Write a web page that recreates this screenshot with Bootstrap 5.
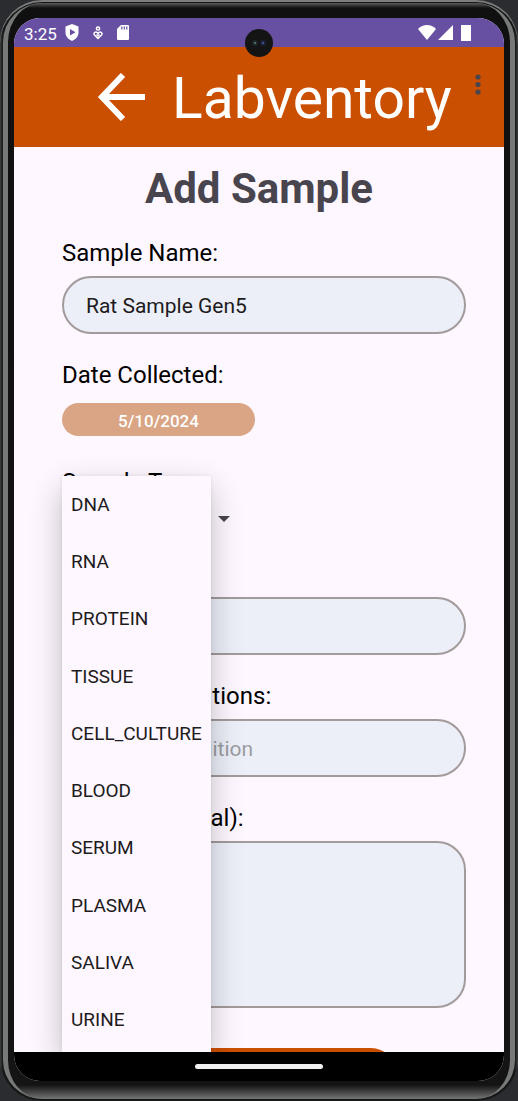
<!DOCTYPE html>
<html lang="en">
<head>
<meta charset="utf-8">
<meta name="viewport" content="width=device-width, initial-scale=1">
<title>Labventory – Add Sample</title>
<link href="https://cdn.jsdelivr.net/npm/bootstrap@5.3.0/dist/css/bootstrap.min.css" rel="stylesheet">
<style>
  :root { --brand: #cb4f00; --status: #6750a2; --surface: #fef7ff; --ink: #1d1b20; --muted: #49454f; }
  body { font-family: Roboto, sans-serif; background: #2b2c30; color: var(--ink); }
  /* device body: metal rim, then black bezel */
  .phone-rim {
    border-radius: 42px; padding: 3px 3px 2px 3px;
    background: linear-gradient(90deg, #3c3e3e 0, #161818 3px, #161818 calc(100% - 3px), #3c3e3e 100%);
    box-shadow: inset 0 2px 0 #7c7c7c;
  }
  .phone-bezel {
    border-radius: 39px; padding: 15px 6px 18px 6px;
    background: linear-gradient(180deg, #5a5a5a 0, #101010 5px, #141414 calc(100% - 14px), #757575 100%);
    border: solid #777979; border-width: 0 5px 0 5px;
  }
  .phone-screen { border-radius: 26px; background: var(--surface); }
  .camera { top: 11px; width: 28px; height: 28px; background: #141414; z-index: 3; }
  .status-bar { height: 29px; background: var(--status); font-size: 17px; line-height: 29px; padding-left: 10px; }
  .status-bar svg, .app-bar svg { display: block; }
  .status-icons { gap: 14px; }
  .app-bar { height: 100px; background: var(--brand); padding: 0 16px 0 80px; }
  .brand-name { font-size: 57px; line-height: 104px; margin-left: 22px; }
  .bare-btn { border: 0; background: none; padding: 0; color: inherit; }
  .more-btn { margin: 27px 5px 0 0; color: var(--muted); }
  .page-title { font-size: 42px; line-height: 50px; font-weight: 700; color: var(--muted); padding: 17px 0 24px; }
  .sample-form { padding: 0 38px 0 48px; }
  .field { margin-bottom: 26px; }
  .field-label { display: block; font-size: 24px; line-height: 30px; color: #000; margin-bottom: 8px; }
  .field-box.form-control {
    height: 58px; border: 2px solid #a39b9b; border-radius: 29px; background: #eceff8;
    color: var(--ink); font-size: 21px; line-height: 30px; padding: 13px 22px 11px;
  }
  .field-box.form-control::placeholder { color: #9b9da3; opacity: 1; }
  textarea.field-box.form-control { height: 167px; resize: none; }
  .notes-field { margin-bottom: 40px; }
  .date-btn.btn {
    display: block; width: 193px; height: 33px; margin: 13px 0 31px; padding: 4px 0 0; border: 0;
    border-radius: 17px; background: #d9a585; color: #fff; font-size: 17px; line-height: 29px; font-weight: 500;
  }
  .type-select.form-select {
    width: 193px; height: 28px; padding: 0 32px 0 8px; border: 0; color: var(--ink); font-size: 19px; line-height: 28px;
    background: transparent url("data:image/svg+xml,%3Csvg xmlns='http://www.w3.org/2000/svg' viewBox='0 0 12 6'%3E%3Cpath fill='%2349454f' d='M0 0h12L6 6z'/%3E%3C/svg%3E") no-repeat right 25px center / 12px 6px;
  }
  .save-btn.btn { display: block; width: 264px; height: 50px; margin: 0 auto; border: 0; border-radius: 25px; background: var(--brand); color: #fff; font-size: 21px; }
  .type-menu { top: 329px; bottom: 0; left: 48px; width: 149px; padding-bottom: 3px; background: var(--surface); box-shadow: 0 12px 30px rgba(0,0,0,.24), 0 0 4px rgba(0,0,0,.08); z-index: 2; }
  .type-menu button { font-size: 19px; line-height: 30px; padding-left: 9px; text-align: left; white-space: nowrap; }
  .gesture-bar { height: 29px; background: #000; padding-top: 12px; }
  .gesture-pill { width: 128px; height: 5px; border-radius: 3px; background: #f0f0f0; }
</style>
</head>
<body>
<div class="phone-rim vh-100 d-flex">
  <div class="phone-bezel flex-fill d-flex">
    <div class="phone-screen position-relative flex-fill d-flex flex-column overflow-hidden">
      <div class="camera position-absolute start-50 translate-middle-x rounded-circle d-flex align-items-center justify-content-center">
        <svg width="16" height="10" viewBox="0 0 16 10" aria-hidden="true"><circle cx="4" cy="5" r="3" fill="#1e2628"/><circle cx="4" cy="5" r="1" fill="#5c8086"/><circle cx="12" cy="5" r="3" fill="#1c2236"/><circle cx="12" cy="5" r="1" fill="#4d63a8"/></svg>
      </div>

      <div class="status-bar d-flex align-items-center text-white flex-shrink-0">
        <span class="pt-1">3:25</span>
        <div class="status-icons d-flex align-items-center ms-2">
          <svg width="14" height="17" viewBox="0 0 14 17" aria-label="Play Protect"><path fill="#fff" d="M7 0l6.500 2.500v6c0 4-3 7-6.500 8.500C3.500 15.500.500 12.500.500 8.500v-6z"/><path fill="#6750a2" d="M5 5l5.500 3.300L5 11.500z"/></svg>
          <svg width="10" height="14" viewBox="0 0 10 14" fill="none" stroke="#fff" stroke-width="1.500" aria-label="Wellbeing"><circle cx="5" cy="2.500" r="1.600"/><path d="M5 12.500L1.500 9C-.3 6.800 3 4.700 5 7.500 7 4.700 10.300 6.800 8.500 9z"/><path d="M3.500 8.500L5 10l1.500-1.500"/></svg>
          <svg width="12" height="15" viewBox="0 0 12 15" aria-label="SD card"><path fill="#fff" d="M4 0h7a1 1 0 0 1 1 1v13a1 1 0 0 1-1 1H1a1 1 0 0 1-1-1V4z"/><path stroke="#6750a2" stroke-width="1.200" d="M4.800 1.500v3M7.300 1.500v3M9.800 1.500v3"/></svg>
        </div>
        <svg class="ms-auto" width="18" height="15" viewBox="0 0 18 15" aria-label="Wi-Fi"><path fill="#fff" d="M0 4C5-1.300 13-1.300 18 4L9 15z"/></svg>
        <svg class="me-2" width="17" height="15" viewBox="0 0 17 15" aria-label="Signal"><path fill="#fff" d="M17 0v15H2z"/></svg>
        <svg class="me-4" width="19" height="16" viewBox="0 0 19 16" aria-label="Battery"><path fill="#fff" d="M0 0h10v16H0z"/></svg>
      </div>

      <header class="app-bar d-flex align-items-start text-white flex-shrink-0">
        <button class="bare-btn align-self-center" type="button" aria-label="Back">
          <svg width="56" height="48" viewBox="0 0 56 48"><path fill="none" stroke="#fff" stroke-width="6" d="M51 24H8M29 2L8 24l21 22"/></svg>
        </button>
        <span class="brand-name">Labventory</span>
        <button class="bare-btn more-btn ms-auto" type="button" aria-label="More options">
          <svg width="10" height="21" viewBox="0 0 10 21" fill="currentColor"><circle cx="5" cy="3" r="2.600"/><circle cx="5" cy="10.500" r="2.600"/><circle cx="5" cy="18" r="2.600"/></svg>
        </button>
      </header>

      <main class="position-relative flex-fill overflow-hidden" style="min-height:0">
        <h1 class="page-title text-center m-0">Add Sample</h1>
        <form class="sample-form">
          <div class="field">
            <label class="field-label" for="name">Sample Name:</label>
            <input class="form-control field-box" id="name" type="text" value="Rat Sample Gen5">
          </div>
          <label class="field-label" for="date">Date Collected:</label>
          <button class="btn date-btn" id="date" type="button">5/10/2024</button>
          <div class="field">
            <label class="field-label" for="type">Sample Type:</label>
            <select class="form-select type-select" id="type"><option>DNA</option></select>
          </div>
          <div class="field">
            <label class="field-label" for="qty">Quantity:</label>
            <input class="form-control field-box" id="qty" type="text">
          </div>
          <div class="field">
            <label class="field-label" for="storage">Storage Conditions:</label>
            <input class="form-control field-box" id="storage" type="text" placeholder="Storage Condition">
          </div>
          <div class="notes-field">
            <label class="field-label" for="notes">Notes (Optional):</label>
            <textarea class="form-control field-box" id="notes"></textarea>
          </div>
          <button class="btn save-btn" type="submit" aria-label="Save"></button>
        </form>

        <div class="type-menu position-absolute d-flex flex-column" role="listbox" aria-label="Sample type">
          <button class="bare-btn flex-fill" type="button">DNA</button>
          <button class="bare-btn flex-fill" type="button">RNA</button>
          <button class="bare-btn flex-fill" type="button">PROTEIN</button>
          <button class="bare-btn flex-fill" type="button">TISSUE</button>
          <button class="bare-btn flex-fill" type="button">CELL_CULTURE</button>
          <button class="bare-btn flex-fill" type="button">BLOOD</button>
          <button class="bare-btn flex-fill" type="button">SERUM</button>
          <button class="bare-btn flex-fill" type="button">PLASMA</button>
          <button class="bare-btn flex-fill" type="button">SALIVA</button>
          <button class="bare-btn flex-fill" type="button">URINE</button>
        </div>
      </main>

      <div class="gesture-bar flex-shrink-0"><div class="gesture-pill mx-auto"></div></div>
    </div>
  </div>
</div>
<script src="https://cdn.jsdelivr.net/npm/bootstrap@5.3.0/dist/js/bootstrap.bundle.min.js"></script>
</body>
</html>
